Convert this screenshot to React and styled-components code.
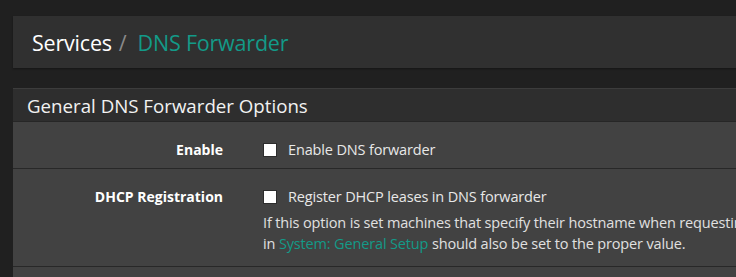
import React from 'react';
import styled, { createGlobalStyle } from 'styled-components';

const GlobalStyle = createGlobalStyle`
  html, body {
    margin: 0;
    padding: 0;
    background: #202020;
    font-family: "Open Sans", "Noto Sans", sans-serif;
    color: #e6e6e6;
  }
`;

const Page = styled.div`
  padding: 16px 0 0 13px;
  width: 760px;
  overflow: hidden;
`;

const Breadcrumb = styled.div`
  display: flex;
  align-items: center;
  height: 52px;
  padding-left: 19px;
  background: #303030;
  box-shadow: 0 1px 2px rgba(0, 0, 0, 0.35);
  font-size: 21.5px;
  letter-spacing: -0.2px;
`;

const Crumb = styled.span`
  color: ${props => (props.active ? '#139a88' : '#ffffff')};
`;

const Slash = styled.span`
  color: #8a8a8a;
  margin: 0 11px 0 7px;
`;

const Panel = styled.div`
  margin-top: 20px;
  border-top: 1px solid #3c3c3c;
  background: #424242;
`;

const PanelHeading = styled.div`
  height: 32px;
  display: flex;
  align-items: center;
  padding-left: 14px;
  background: #2e2e2e;
  border-bottom: 1px solid #262626;
  font-size: 18.7px;
  color: #f2f2f2;
`;

const Row = styled.div`
  display: flex;
  padding: 20px 0 ${props => props.bottom}px;
  border-bottom: 1px solid #282828;
`;

const Label = styled.div`
  flex: 0 0 210px;
  text-align: right;
  white-space: nowrap;
  font-weight: 700;
  font-size: 14px;
  color: #ffffff;
  line-height: 15px;
`;

const Field = styled.div`
  margin-left: 40px;
  font-size: 14.5px;
  line-height: 21px;
  letter-spacing: -0.15px;
`;

const CheckLine = styled.label`
  display: flex;
  align-items: center;
  height: 15px;
  color: #e8e8e8;
`;

const Box = styled.span`
  width: 14px;
  height: 14px;
  background: #ffffff;
  border: 1px solid #2c2c2c;
  box-sizing: border-box;
  margin-right: 11px;
`;

const Help = styled.div`
  margin-top: 8px;
  color: #e0e0e0;
  white-space: nowrap;
`;

const Link = styled.a`
  color: #139a88;
  text-decoration: none;
`;

export default function App() {
  return (
    <>
      <GlobalStyle />
      <Page>
        <Breadcrumb>
          <Crumb>Services</Crumb>
          <Slash>/</Slash>
          <Crumb active>DNS Forwarder</Crumb>
        </Breadcrumb>
        <Panel>
          <PanelHeading>General DNS Forwarder Options</PanelHeading>
          <Row bottom={11}>
            <Label>Enable</Label>
            <Field>
              <CheckLine><Box />Enable DNS forwarder</CheckLine>
            </Field>
          </Row>
          <Row bottom={12}>
            <Label>DHCP Registration</Label>
            <Field>
              <CheckLine><Box />Register DHCP leases in DNS forwarder</CheckLine>
              <Help>
                If this option is set machines that specify their hostname when requesting
                <br />
                in <Link href="#">System: General Setup</Link> should also be set to the proper value.
              </Help>
            </Field>
          </Row>
          <Row bottom={20} />
        </Panel>
      </Page>
    </>
  );
}
